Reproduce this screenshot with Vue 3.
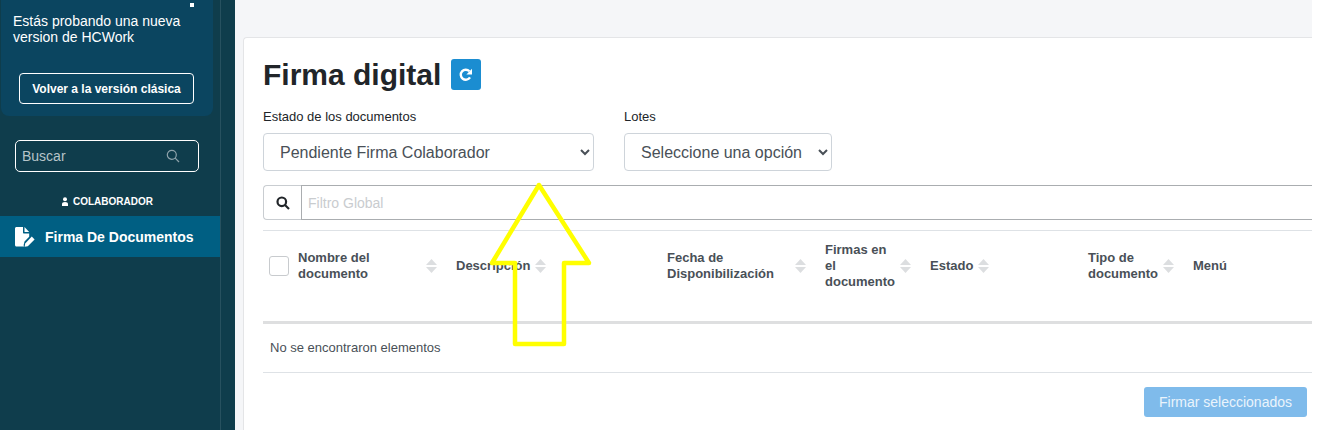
<script setup>
const cols = [
  { label: 'Nombre del documento', w: 158, sort: true },
  { label: 'Descripción', w: 211, sort: true },
  { label: 'Fecha de Disponibilización', w: 158, sort: true },
  { label: 'Firmas en el documento', w: 105, sort: true },
  { label: 'Estado', w: 158, sort: true },
  { label: 'Tipo de documento', w: 105, sort: true },
  { label: 'Menú', w: 119, sort: false }
]
</script>

<template>
  <div class="page">
    <aside class="sidebar">
      <div class="rail">
        <section class="promo">
          <span class="promo-dot"></span>
          <p class="promo-text">Estás probando una nueva version de HCWork</p>
          <button class="promo-btn" type="button">Volver a la versión clásica</button>
        </section>
        <div class="search">
          <span>Buscar</span>
          <svg width="14" height="14" viewBox="0 0 14 14" fill="none" stroke="#8fa3ab" stroke-width="1.2">
            <circle cx="5.8" cy="5.8" r="4.5" />
            <path d="M9.2 9.2 13 13" />
          </svg>
        </div>
        <div class="role">
          <svg width="8" height="9" viewBox="0 0 8 9" fill="#fff">
            <circle cx="4" cy="2.2" r="2" />
            <path d="M1 9V7C1 5.600 2 4.900 4 4.900S7 5.600 7 7V9z" />
          </svg>
          <span>COLABORADOR</span>
        </div>
        <div class="menu-item">
          <svg width="21" height="20" viewBox="0 0 21 20" fill="#fff">
            <path d="M1.5 0H8v5.5c0 .6.4 1 1 1h5.200v3.300L9.500 14.500l-.8 3.200c-.1.600 0 1.300.4 1.800H1.500C.7 19.500 0 18.800 0 18V1.500C0 .7.700 0 1.500 0z" />
            <path d="M9.500 0 14.200 5H9.500z" />
            <path d="M16.800 9.600 19.600 12.400 12.800 19.200 9.600 19.800 10.200 16.400z" />
          </svg>
          <span>Firma De Documentos</span>
        </div>
      </div>
    </aside>

    <main class="main">
      <div class="topbar"></div>
      <section class="card">
        <div class="heading">
          <h1>Firma digital</h1>
          <button class="refresh" type="button" aria-label="Actualizar">
            <svg width="16" height="16" viewBox="0 0 16 16" fill="none">
              <path d="M12 10.400A5 5 0 1 1 11.400 4.300" stroke="#fff" stroke-width="2.400" />
              <path d="M14 1.800V7.400H8.400z" fill="#fff" />
            </svg>
          </button>
        </div>

        <div class="filters">
          <label class="field">
            <span class="field-label">Estado de los documentos</span>
            <select class="select select-wide">
              <option>Pendiente Firma Colaborador</option>
            </select>
          </label>
          <label class="field">
            <span class="field-label">Lotes</span>
            <select class="select select-narrow">
              <option>Seleccione una opción</option>
            </select>
          </label>
        </div>

        <div class="global">
          <span class="global-icon">
            <svg width="14" height="14" viewBox="0 0 14 14" fill="none" stroke="#212529" stroke-width="2.200">
              <circle cx="5.800" cy="5.800" r="4.300" />
              <path d="M9 9 13 13" />
            </svg>
          </span>
          <span class="global-input">Filtro Global</span>
        </div>

        <table class="grid">
          <colgroup>
            <col style="width: 35px" />
            <col v-for="c in cols" :key="c.label" :style="{ width: c.w + 'px' }" />
          </colgroup>
          <thead>
            <tr>
              <th class="check-cell"><span class="check"></span></th>
              <th v-for="c in cols" :key="c.label">
                <div class="th-inner">
                  <span class="th-label">{{ c.label }}</span>
                  <svg v-if="c.sort" class="sort" width="11" height="14" viewBox="0 0 11 14" fill="#dcdee0">
                    <path d="M5.500 0 11 6H0z" />
                    <path d="M0 8h11l-5.500 6z" />
                  </svg>
                </div>
              </th>
            </tr>
          </thead>
          <tbody>
            <tr>
              <td colspan="8">No se encontraron elementos</td>
            </tr>
          </tbody>
        </table>

        <div class="actions">
          <button class="sign" type="button">Firmar seleccionados</button>
        </div>
      </section>
    </main>

    <svg class="arrow" width="104" height="166" viewBox="0 0 104 166" fill="none">
      <path d="M50 3 3 81H26V162H75V81H100z" stroke="#ffff00" stroke-width="4.500" stroke-linejoin="round" />
    </svg>
  </div>
</template>

<style>
html, body { margin: 0; background: #fff; }
</style>

<style scoped>
.page {
  position: relative;
  display: flex;
  width: 1312px;
  height: 430px;
  overflow: hidden;
  font-family: "Liberation Sans", Arial, sans-serif;
  color: #212529;
}
.sidebar {
  flex: 0 0 235px;
  background: #0f3d4c;
}
.rail {
  width: 220px;
  height: 100%;
  border-right: 1px solid #27515f;
  box-sizing: content-box;
}
.promo {
  position: relative;
  box-sizing: border-box;
  width: 212px;
  height: 116px;
  margin-left: 1px;
  padding: 13px 12px 0;
  background: #0b4560;
  border-radius: 0 0 8px 8px;
}
.promo-dot {
  position: absolute;
  top: 3px;
  left: 189px;
  width: 4px;
  height: 4px;
  background: #fff;
}
.promo-text {
  margin: 0;
  width: 180px;
  font-size: 14px;
  line-height: 16px;
  color: #fff;
}
.promo-btn {
  display: block;
  box-sizing: border-box;
  width: 175px;
  height: 31px;
  margin: 28px 0 0 6px;
  padding: 0;
  border: 1px solid #fff;
  border-radius: 4px;
  background: transparent;
  color: #fff;
  font: bold 12px "Liberation Sans", Arial, sans-serif;
}
.search {
  display: flex;
  align-items: center;
  justify-content: space-between;
  box-sizing: border-box;
  width: 184px;
  height: 32px;
  margin: 24px 0 0 15px;
  padding: 0 18px 0 6px;
  border: 1px solid #fff;
  border-radius: 5px;
  font-size: 14px;
  color: #b6c4c9;
}
.role {
  display: flex;
  align-items: center;
  justify-content: center;
  gap: 4px;
  width: 214px;
  margin-top: 22px;
  height: 14px;
  font-size: 10px;
  font-weight: bold;
  color: #fff;
}
.menu-item {
  display: flex;
  align-items: center;
  gap: 9px;
  height: 41px;
  margin-top: 8px;
  padding-left: 15px;
  background: #005f83;
  font-size: 14px;
  font-weight: bold;
  color: #fff;
}
.main {
  flex: 1;
  min-width: 0;
  background: #f5f6f8;
  display: flex;
  flex-direction: column;
}
.topbar {
  flex: 0 0 37px;
}
.card {
  flex: 1;
  margin-left: 8px;
  padding: 0 0 0 19px;
  background: #fff;
  border: 1px solid #e4e5e7;
  border-right: 0;
  border-bottom: 0;
  border-radius: 4px 0 0 0;
  box-sizing: border-box;
}
.heading {
  display: flex;
  align-items: center;
  gap: 10px;
  height: 31px;
  margin-top: 21px;
}
.heading h1 {
  margin: 0;
  font-size: 30px;
  line-height: 36px;
  font-weight: bold;
  color: #212529;
}
.refresh {
  display: flex;
  align-items: center;
  justify-content: center;
  width: 30px;
  height: 31px;
  padding: 0;
  border: 0;
  border-radius: 3px;
  background: #1b8dd1;
}
.filters {
  display: flex;
  gap: 30px;
  margin-top: 19px;
}
.field {
  display: flex;
  flex-direction: column;
}
.field-label {
  font-size: 13px;
  line-height: 15px;
  color: #212529;
}
.select {
  box-sizing: border-box;
  height: 38px;
  margin-top: 9px;
  padding: 0 8px 0 12px;
  border: 1px solid #ced4da;
  border-radius: 4px;
  background: #fff;
  color: #495057;
  font: 16px "Liberation Sans", Arial, sans-serif;
}
.select-wide { width: 331px; }
.select-narrow { width: 208px; }
.global {
  display: flex;
  height: 35px;
  margin-top: 14px;
}
.global-icon {
  display: flex;
  align-items: center;
  justify-content: center;
  box-sizing: border-box;
  width: 38px;
  border: 1px solid #c9cdd1;
  border-right: 0;
  border-radius: 4px 0 0 4px;
  background: #fff;
}
.global-input {
  flex: 1;
  display: flex;
  align-items: center;
  padding-left: 6px;
  border: 1px solid #aaadb0;
  border-right: 0;
  font-size: 14px;
  color: #c9cccf;
}
.grid {
  width: 1049px;
  margin-top: 10px;
  border-collapse: collapse;
  table-layout: fixed;
  font-size: 13px;
}
.grid th {
  height: 92px;
  padding: 0 0 20px 0;
  vertical-align: middle;
  text-align: left;
  box-sizing: border-box;
  border-top: 1px solid #dee2e6;
  border-bottom: 3px solid #dedfe0;
  color: #495057;
  font-weight: bold;
  line-height: 16px;
}
.th-inner {
  display: flex;
  align-items: center;
  justify-content: flex-start;
  gap: 5px;
  padding-right: 19px;
}
.th-label { flex: 0 1 auto; }
.sort { flex: 0 0 11px; }
.check-cell { padding-left: 6px !important; }
.check {
  display: block;
  box-sizing: border-box;
  width: 20px;
  height: 20px;
  border: 1px solid #c8cbce;
  border-radius: 3px;
  background: #fff;
}
.grid td {
  height: 47px;
  padding: 0 0 1px 7px;
  border-bottom: 1px solid #dee2e6;
  color: #495057;
  font-size: 13px;
}
.actions {
  display: flex;
  justify-content: flex-end;
  width: 1044px;
  margin-top: 14px;
}
.sign {
  width: 163px;
  height: 30px;
  padding: 0;
  border: 0;
  border-radius: 3px;
  background: #7fbbeb;
  color: #eaf4fc;
  font: 14px "Liberation Sans", Arial, sans-serif;
}
.arrow {
  position: absolute;
  left: 489px;
  top: 182px;
}
</style>
